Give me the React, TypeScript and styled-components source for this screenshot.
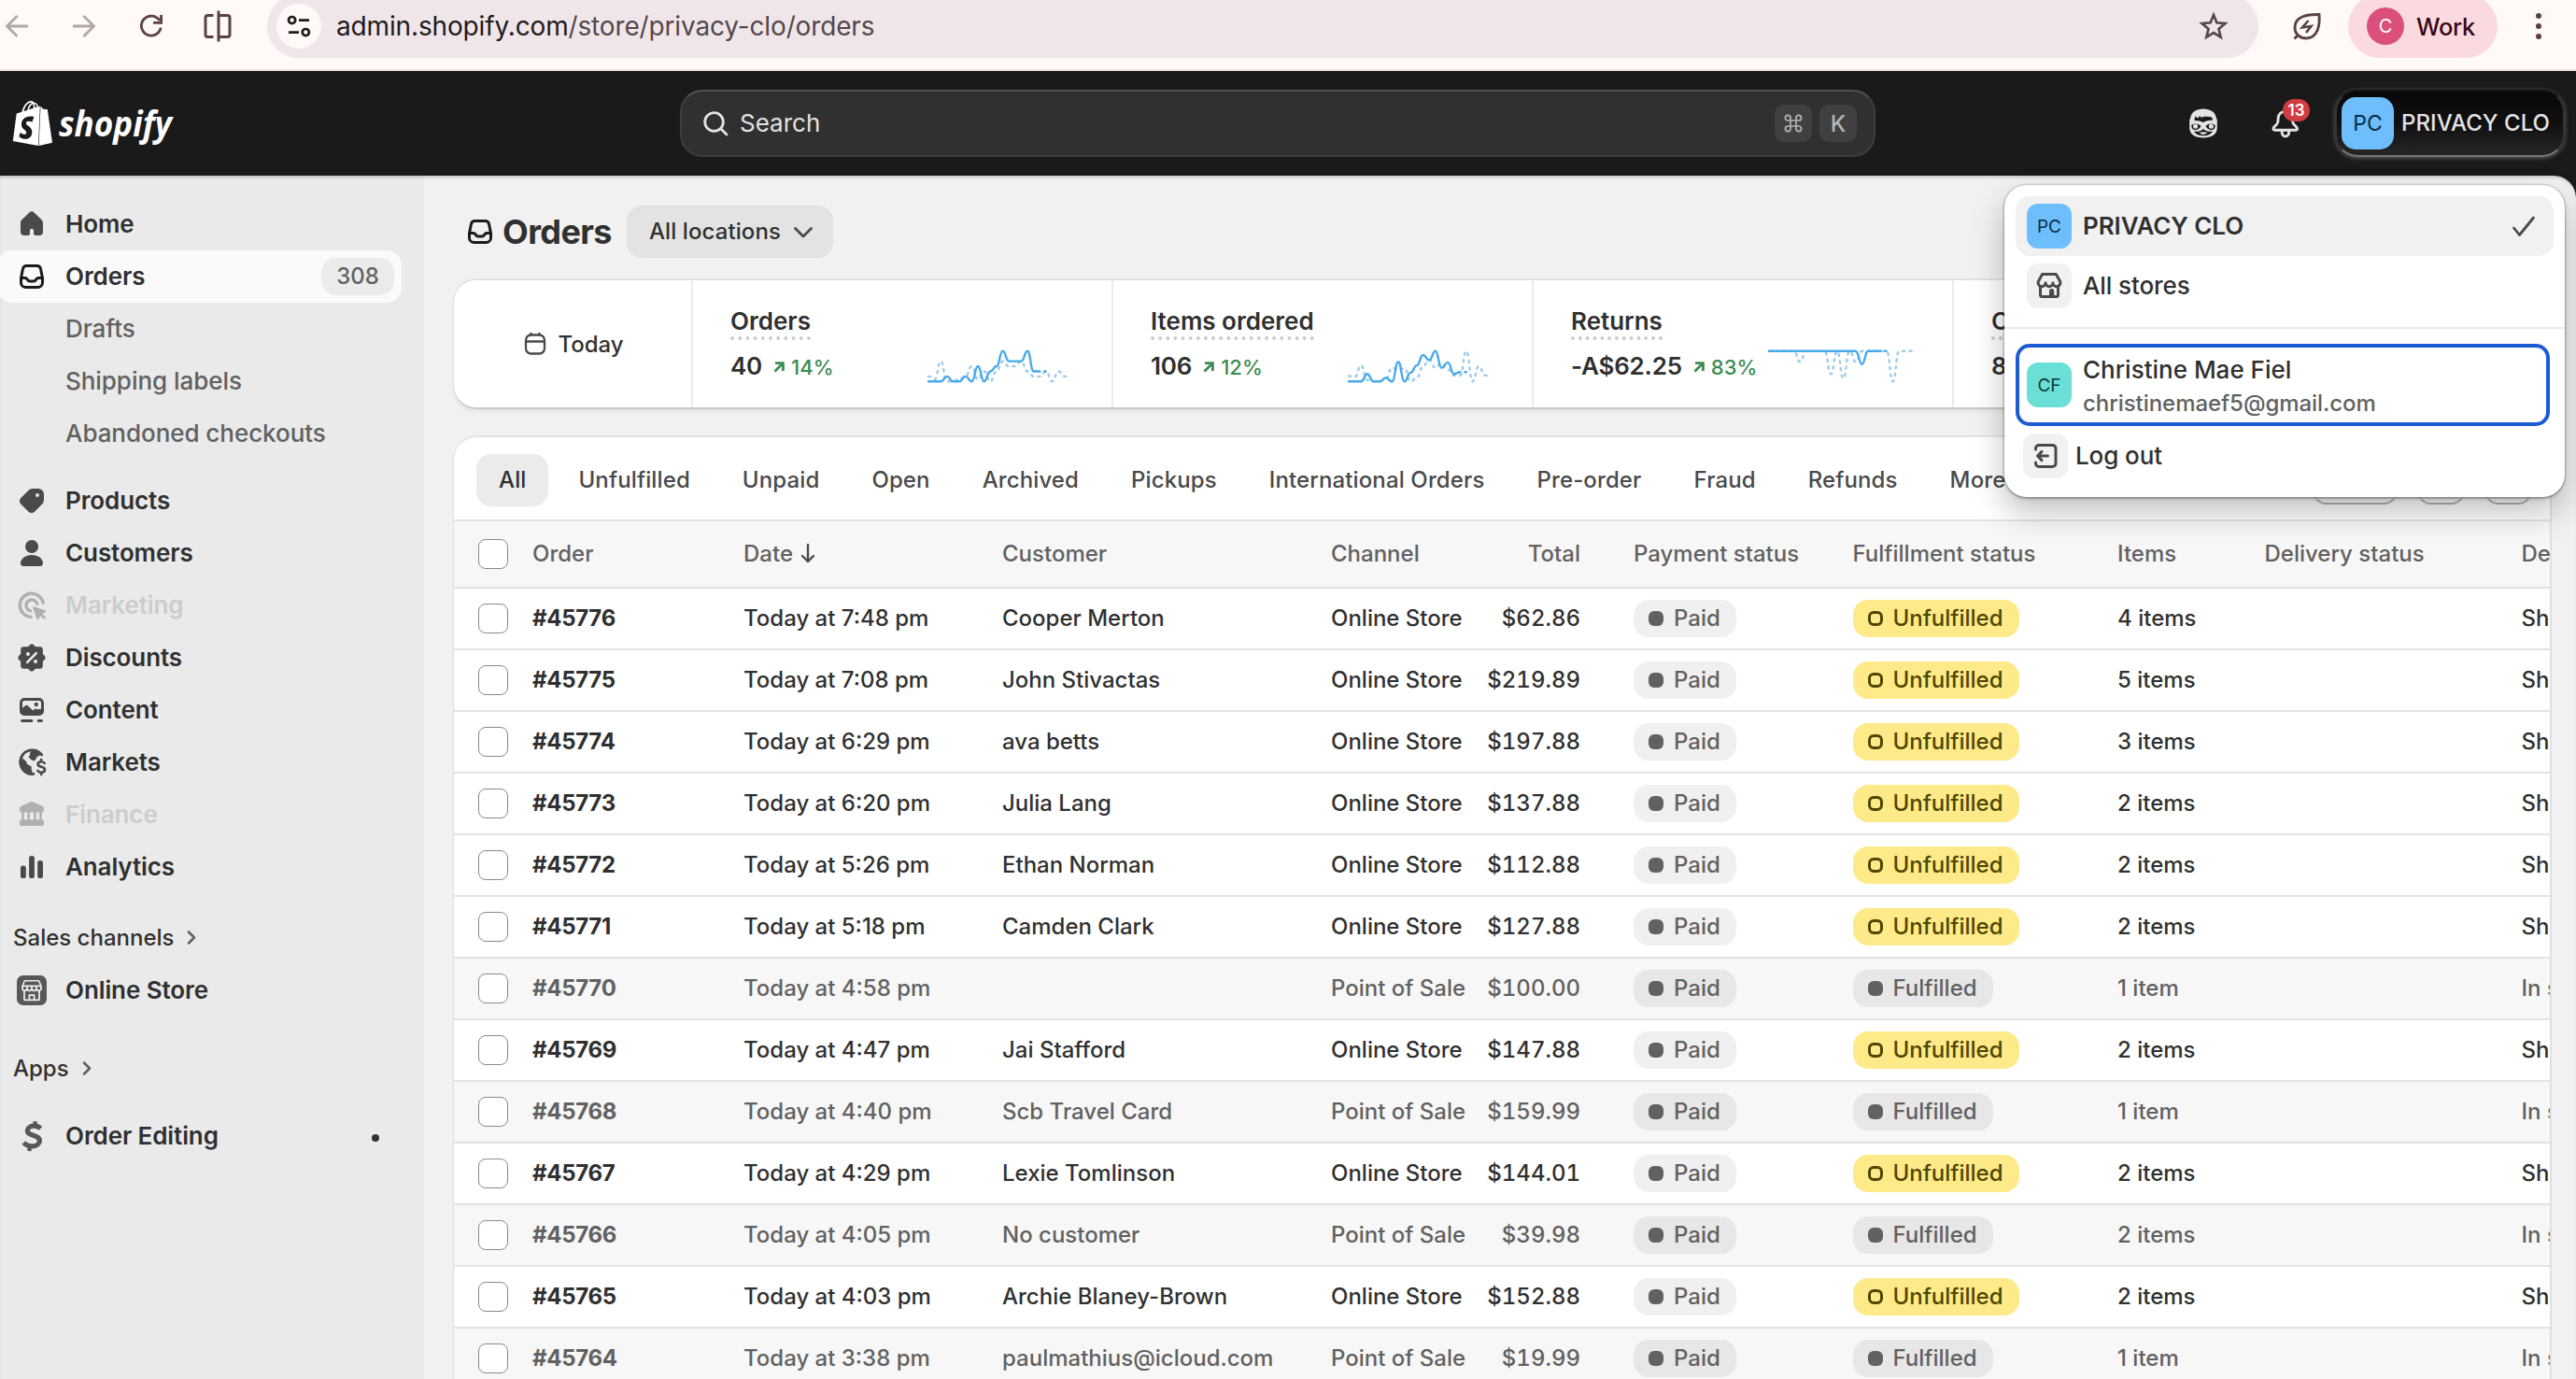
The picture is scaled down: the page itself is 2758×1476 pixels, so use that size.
import React from "react";
import styled, { createGlobalStyle, css } from "styled-components";
import { SiShopify } from "react-icons/si";

const GlobalStyle = createGlobalStyle`
  * { box-sizing: border-box; }
  html, body { margin: 0; padding: 0; background: #1a1a1a; }
  body {
    font-family: Inter, "Liberation Sans", sans-serif;
    color: #303030;
    overflow: hidden;
    -webkit-font-smoothing: antialiased;
  }
`;

const Page = styled.div`
  position: relative;
  width: 2758px;
  height: 1476px;
  overflow: hidden;
  display: flex;
  flex-direction: column;
`;

/* ---------- Browser toolbar ---------- */

const BrowserBar = styled.div`
  flex: none;
  height: 76px;
  padding-bottom: 18px;
  display: flex;
  align-items: center;
  background: #fff9f7;
  border-bottom: 2px solid #f1e2e3;
`;

const BrowserNav = styled.div`
  flex: none;
  display: grid;
  grid-template-columns: 36px 108px 36px 106px;
  justify-items: center;
  align-items: center;
  color: #5a4144;
`;

const AddressBar = styled.div`
  flex: none;
  width: 2132px;
  height: 68px;
  border-radius: 34px;
  background: #f0e6ea;
  display: flex;
  align-items: center;
  padding: 0 32px 0 10px;
`;

const SiteButton = styled.div`
  width: 48px;
  height: 48px;
  border-radius: 50%;
  background: #fff9f7;
  display: flex;
  align-items: center;
  justify-content: center;
`;

const Address = styled.div`
  flex: 1;
  padding-left: 16px;
  font-size: 28px;
  line-height: 40px;
  letter-spacing: -0.15px;
  color: #55474b;
  white-space: nowrap;
`;

const Host = styled.span`
  color: #201a1b;
`;

const BrowserActions = styled.div`
  flex: 1;
  display: flex;
  align-items: center;
  color: #5a4144;
`;

const SaverButton = styled.div`
  width: 96px;
  padding-left: 8px;
  display: flex;
  justify-content: center;
`;

const ProfilePill = styled.div`
  width: 160px;
  height: 68px;
  border-radius: 34px;
  background: #fadadf;
  color: #3a0715;
  display: flex;
  align-items: center;
  gap: 13px;
  padding-left: 20px;
  font-size: 25.5px;
  font-weight: 500;
  letter-spacing: -0.3px;
`;

const ProfileAvatar = styled.div`
  width: 40px;
  height: 40px;
  border-radius: 50%;
  background: #db4f7b;
  color: #fff;
  font-size: 20px;
  font-weight: 400;
  display: flex;
  align-items: center;
  justify-content: center;
`;

const MenuDots = styled.div`
  width: 88px;
  display: flex;
  flex-direction: column;
  align-items: center;
  gap: 5px;
`;

const MenuDot = styled.span`
  width: 6px;
  height: 6px;
  border-radius: 50%;
  background: #5a4144;
`;

/* ---------- Admin top bar ---------- */

const TopBar = styled.header`
  flex: none;
  height: 112px;
  background: #1a1a1a;
  display: flex;
  align-items: center;
  color: #e3e3e3;
`;

const Brand = styled.div`
  width: 728px;
  padding-left: 11px;
  display: flex;
  align-items: center;
  color: #fff;
`;

const Wordmark = styled.svg`
  margin-left: 4px;
  overflow: visible;
`;

const SearchField = styled.div`
  width: 1280px;
  height: 72px;
  border-radius: 24px;
  background: #303030;
  border: 2px solid #3d3d3d;
  border-top-color: #505050;
  display: flex;
  align-items: center;
  padding: 0 18px 0 20px;
  gap: 8px;
  font-size: 26px;
`;

const SearchLabel = styled.span`
  flex: 1;
  padding: 0 0 2px 2px;
`;

const Key = styled.span`
  width: 40px;
  height: 40px;
  border-radius: 10px;
  background: #404040;
  color: #b5b5b5;
  font-size: 24px;
  font-weight: 500;
  display: flex;
  align-items: center;
  justify-content: center;
`;

const TopActions = styled.div`
  flex: 1;
  display: flex;
  align-items: center;
  justify-content: flex-end;
  padding-right: 12px;
`;

const TopIcon = styled.div`
  position: relative;
  width: 40px;
  height: 40px;
  margin-right: 48px;
  display: flex;
  align-items: center;
  justify-content: center;
`;

const BellIcon = styled(TopIcon)`
  margin-right: 33px;
`;

const AlertBadge = styled.span`
  position: absolute;
  left: 17px;
  top: -6px;
  width: 29px;
  height: 24px;
  border-radius: 12px;
  background: #d13c40;
  color: #fff;
  font-size: 17px;
  font-weight: 600;
  line-height: 24px;
  text-align: center;
`;

const StoreButton = styled.div`
  width: 246px;
  height: 72px;
  border-radius: 24px;
  background: linear-gradient(180deg, #080808 0%, #101010 50%, #262626 100%);
  border: 2px solid #333333;
  border-top-color: #131313;
  border-bottom-color: #767676;
  box-shadow: 0 1px 5px rgba(255, 255, 255, 0.32);
  display: flex;
  align-items: center;
  padding-left: 5px;
  font-size: 24px;
  font-weight: 500;
  letter-spacing: 0.05px;
  white-space: nowrap;
`;

const Initials = styled.span<{ $size: number; $bg: string; $ink: string }>`
  flex: none;
  width: ${(p) => p.$size}px;
  height: ${(p) => p.$size}px;
  border-radius: ${(p) => (p.$size > 50 ? 15 : 12)}px;
  background: ${(p) => p.$bg};
  color: ${(p) => p.$ink};
  font-size: ${(p) => (p.$size > 50 ? 23 : 19)}px;
  font-weight: 400;
  letter-spacing: 0;
  display: flex;
  align-items: center;
  justify-content: center;
`;

const StoreButtonName = styled.span`
  padding: 0 0 2px 8px;
`;

/* ---------- Frame ---------- */

const Frame = styled.div`
  flex: 1;
  min-height: 0;
  display: flex;
  background: #f1f1f1;
  border-top-right-radius: 24px;
  overflow: hidden;
  box-shadow: inset 0 3px 3px -1px rgba(0, 0, 0, 0.18);
`;

const Sidebar = styled.nav`
  flex: none;
  width: 454px;
  padding-top: 24px;
  background: rgba(0, 0, 0, 0.027);
  display: flex;
  flex-direction: column;
`;

const NavRow = styled.div<{ $active?: boolean; $disabled?: boolean; $gap?: number }>`
  flex: none;
  width: 433px;
  height: 56px;
  margin-left: -3px;
  margin-top: ${(p) => p.$gap ?? 0}px;
  padding: 0 8px 0 17px;
  display: flex;
  align-items: center;
  border-radius: 16px;
  font-size: 26px;
  font-weight: 600;
  letter-spacing: -0.1px;
  color: ${(p) => (p.$disabled ? "#cccccc" : "#303030")};
  background: ${(p) => (p.$active ? "#fafafa" : "transparent")};
`;

const NavIcon = styled.span<{ $tone?: string }>`
  width: 40px;
  height: 40px;
  margin-right: 16px;
  display: flex;
  color: ${(p) => p.$tone ?? "#4a4a4a"};
`;

const NavLabel = styled.span`
  flex: 1;
  padding-bottom: 2px;
`;

const SubRow = styled.div`
  flex: none;
  height: 56px;
  padding-left: 70px;
  font-size: 26px;
  font-weight: 450;
  line-height: 56px;
  letter-spacing: -0.05px;
  color: #616161;
`;

const CountBadge = styled.span`
  width: 78px;
  height: 40px;
  border-radius: 16px;
  background: #ebebeb;
  color: #616161;
  font-size: 24px;
  font-weight: 500;
  line-height: 39px;
  text-align: center;
`;

const SectionRow = styled.div<{ $gap: number }>`
  flex: none;
  height: 40px;
  margin-top: ${(p) => p.$gap}px;
  padding: 0 0 2px 14px;
  display: flex;
  align-items: center;
  gap: 12px;
  font-size: 24px;
  font-weight: 550;
`;

const StatusDot = styled.span`
  width: 8px;
  height: 8px;
  margin: 4px 16px 0 0;
  border-radius: 50%;
  background: #303030;
`;

/* ---------- Main ---------- */

const Main = styled.main`
  flex: none;
  width: 2276px;
  padding: 32px 0 0 32px;
  display: flex;
  flex-direction: column;
`;

const TitleRow = styled.div`
  flex: none;
  height: 56px;
  display: flex;
  align-items: center;
  padding-left: 8px;
  color: #1a1a1a;
`;

const Title = styled.h1`
  margin: 0 16px 0 4px;
  font-size: 36px;
  font-weight: 650;
  letter-spacing: -0.6px;
  color: #303030;
`;

const LocationButton = styled.div`
  width: 221px;
  height: 56px;
  border-radius: 16px;
  background: #e3e3e3;
  color: #303030;
  display: flex;
  align-items: center;
  padding: 0 0 1px 24px;
  gap: 13px;
  font-size: 24px;
  font-weight: 550;
  letter-spacing: 0.1px;
  white-space: nowrap;
`;

const StatCard = styled.section`
  height: 136px;
  border-radius: 24px;
  background: #fff;
  overflow: hidden;
  display: flex;
`;

const StatShadow = styled.div`
  flex: none;
  margin-top: 24px;
  border-radius: 24px;
  box-shadow: 0 -2px 0 #e3e3e3, -1px 0 0 #dedede, 1px 0 0 #dedede, 0 2px 1px #c8c8c8, 0 5px 5px rgba(0, 0, 0, 0.05);
`;

const RangeCell = styled.div`
  flex: none;
  width: 256px;
  padding-left: 3px;
  border-right: 2px solid #ebebeb;
  display: flex;
  align-items: center;
  justify-content: center;
  gap: 12px;
  font-size: 24px;
  font-weight: 500;
`;

const StatCell = styled.div`
  flex: none;
  width: 450px;
  padding: 24px 39px 0 40px;
  border-right: 2px solid #ebebeb;
  display: flex;
  flex-direction: column;
  align-items: flex-start;
`;

const StatLabel = styled.div`
  padding-top: 4px;
  font-size: 26px;
  font-weight: 600;
  line-height: 32px;
  white-space: nowrap;
  border-bottom: 4px dotted #cccccc;
`;

const StatRow = styled.div`
  width: 100%;
  height: 32px;
  margin-top: 12px;
  display: flex;
  align-items: center;
`;

const StatValue = styled.span`
  padding-bottom: 1px;
  font-size: 26px;
  font-weight: 600;
  letter-spacing: -0.2px;
  margin-right: 12px;
`;

const Trend = styled.span`
  display: flex;
  align-items: center;
  gap: 7px;
  padding-top: 2px;
  font-size: 22px;
  font-weight: 550;
  color: #3a8b50;
`;

const SparkSvg = styled.svg`
  margin-left: auto;
  flex: none;
`;

const TableCard = styled.section`
  flex: 1;
  min-height: 0;
  margin-top: 32px;
  border-radius: 24px 24px 0 0;
  background: #fff;
  box-shadow: 0 -2px 0 #e3e3e3, -1px 0 0 #dedede, 2px 0 0 #e0e0e0;
  overflow: hidden;
`;

const Toolbar = styled.div`
  height: 90px;
  padding: 18px 18px 0 24px;
  border-bottom: 2px solid #e3e3e3;
  display: flex;
  gap: 8px;
`;

const Tab = styled.div<{ $active?: boolean }>`
  height: 56px;
  padding: 0 24px;
  border-radius: 16px;
  font-size: 24px;
  font-weight: 550;
  line-height: 56px;
  letter-spacing: 0.12px;
  white-space: nowrap;
  color: ${(p) => (p.$active ? "#303030" : "#4a4a4a")};
  background: ${(p) => (p.$active ? "#ebebeb" : "transparent")};
`;

const ToolbarButtons = styled.div`
  flex: none;
  margin-left: auto;
  padding-top: 2px;
  display: flex;
  gap: 19px;
`;

const ToolbarButton = styled.div<{ $w: number }>`
  flex: none;
  width: ${(p) => p.$w}px;
  height: 52px;
  border-radius: 16px;
  border: 2px solid #e3e3e3;
  border-bottom-color: #b0b0b0;
`;

const gridColumns = css`
  display: grid;
  grid-template-columns: 84px 226px 277px 352px 155px 112px 57px 234.5px 283.5px 157.5px 275px 200px;
  align-items: center;
`;

const HeadRow = styled.div`
  ${gridColumns}
  width: 2415px;
  height: 72px;
  background: #f7f7f7;
  border-bottom: 2px solid #e3e3e3;
  color: #616161;
  font-size: 24px;
  font-weight: 550;
`;

const OrderRow = styled.div<{ $done?: boolean }>`
  ${gridColumns}
  width: 2415px;
  height: 66px;
  border-bottom: 2px solid #e3e3e3;
  background: ${(p) => (p.$done ? "#f7f7f7" : "#ffffff")};
  color: ${(p) => (p.$done ? "#616161" : "#303030")};
  font-size: 24px;
  font-weight: 450;
`;

const Cell = styled.div<{ $right?: boolean; $strong?: boolean }>`
  padding-bottom: 2px;
  white-space: nowrap;
  display: flex;
  align-items: center;
  gap: 7px;
  justify-content: ${(p) => (p.$right ? "flex-end" : "flex-start")};
  ${(p) => p.$right && "font-variant-numeric: tabular-nums;"}
  ${(p) => p.$strong && "font-weight: 650; letter-spacing: -0.3px;"}
`;

const BadgeCell = styled.div`
  display: flex;
`;

const Checkbox = styled.span`
  width: 32px;
  height: 32px;
  margin-left: 26px;
  border: 1.5px solid #8a8a8a;
  border-radius: 8px;
  background: #fff;
  display: block;
`;

const Badge = styled.span<{ $tone: "open" | "plain" | "muted" }>`
  height: 40px;
  padding: 0 17px 0 16px;
  border-radius: 16px;
  display: inline-flex;
  align-items: center;
  gap: 11px;
  font-size: 24px;
  line-height: 38px;
  font-weight: 550;
  color: ${(p) => (p.$tone === "open" ? "#4f4700" : "#616161")};
  background: ${(p) => (p.$tone === "open" ? "#feea89" : p.$tone === "plain" ? "#f0f0f0" : "#e7e7e7")};
`;

const BadgeText = styled.span`
  padding-bottom: 1px;
`;

const Pip = styled.span<{ $hollow?: boolean }>`
  width: 16px;
  height: 16px;
  border-radius: 6px;
  ${(p) => (p.$hollow ? "border: 3px solid currentColor;" : "background: currentColor;")}
`;

/* ---------- Account menu ---------- */

const Menu = styled.div`
  position: absolute;
  left: 2146px;
  top: 198px;
  width: 600px;
  height: 334px;
  border-radius: 24px;
  background: #fff;
  box-shadow: 0 0 0 1.5px rgba(0, 0, 0, 0.12), 0 2px 3px rgba(0, 0, 0, 0.25), 0 16px 34px rgba(0, 0, 0, 0.25);
  display: flex;
  flex-direction: column;
  padding-top: 12px;
`;

const MenuItem = styled.div<{ $selected?: boolean }>`
  height: 64px;
  width: 576px;
  margin-left: 12px;
  padding: 0 19px 0 12px;
  border-radius: 16px;
  display: flex;
  align-items: center;
  gap: 12px;
  font-size: 26px;
  font-weight: ${(p) => (p.$selected ? 600 : 450)};
  letter-spacing: -0.1px;
  background: ${(p) => (p.$selected ? "#f1f1f1" : "transparent")};
`;

const MenuLabel = styled.span`
  flex: 1;
  padding-bottom: 1px;
`;

const IconTile = styled.span`
  flex: none;
  width: 48px;
  height: 48px;
  border-radius: 12px;
  background: #f1f1f1;
  color: #4a4a4a;
  display: flex;
  align-items: center;
  justify-content: center;
`;

const MenuDivider = styled.div`
  height: 2px;
  margin: 12px 0 16px;
  background: #e8e8e8;
`;

const AccountItem = styled.div`
  height: 88px;
  width: 572px;
  margin-left: 12px;
  padding-left: 8px;
  border: 4px solid #1c5bd2;
  border-radius: 15px;
  display: flex;
  align-items: center;
  gap: 12px;
`;

const AccountText = styled.div`
  padding-top: 4px;
`;

const AccountName = styled.div`
  font-size: 26px;
  font-weight: 550;
  line-height: 36px;
`;

const AccountEmail = styled.div`
  font-size: 24px;
  font-weight: 450;
  line-height: 36px;
  letter-spacing: -0.05px;
  color: #616161;
`;

const LogoutItem = styled(MenuItem)`
  padding-left: 8px;
  gap: 8px;
`;

/* ---------- Icons ---------- */

const Box20 = ({ size = 40, children }: { size?: number; children: React.ReactNode }) => (
  <svg width={size} height={size} viewBox="0 0 20 20" fill="currentColor">
    {children}
  </svg>
);

const line = { fill: "none", stroke: "currentColor", strokeWidth: 1.5, strokeLinecap: "round", strokeLinejoin: "round" } as const;

const InboxIcon = () => (
  <Box20>
    <path {...line} d="M4.25 10.9 5.2 6a2.1 2.1 0 0 1 2.1-1.75h5.4A2.1 2.1 0 0 1 14.8 6l.95 4.9v2.35a2.5 2.5 0 0 1-2.5 2.5h-6.5a2.5 2.5 0 0 1-2.5-2.5z" />
    <path {...line} d="M4.25 10.75h2.1c.5 0 1 .3 1.25.75.3.6.85 1 1.5 1h1.8c.65 0 1.2-.4 1.5-1 .25-.45.75-.75 1.25-.75h2.1" />
  </Box20>
);

const HomeIcon = () => (
  <Box20>
    <path d="M8.6 3.85a2 2 0 0 1 2.8 0l3.8 3.6a2.7 2.7 0 0 1 .8 1.95V14a2 2 0 0 1-2 2h-2a1 1 0 0 1-1-1v-1.6a1 1 0 0 0-2 0V15a1 1 0 0 1-1 1H6a2 2 0 0 1-2-2V9.4c0-.75.3-1.45.8-1.95z" />
  </Box20>
);

const TagIcon = () => (
  <Box20>
    <path fillRule="evenodd" d="M10.4 3.5h3.1a3 3 0 0 1 3 3v3.1a3 3 0 0 1-.9 2.1l-4.1 4.15a2.25 2.25 0 0 1-3.2 0l-4.15-4.15a2.25 2.25 0 0 1 0-3.2L8.3 4.4a3 3 0 0 1 2.1-.9M13 8a1 1 0 1 0 0-2 1 1 0 0 0 0 2" />
  </Box20>
);

const PersonIcon = () => (
  <Box20>
    <circle cx="10" cy="6.5" r="3.5" />
    <path d="M4 15.4C4 13 6.7 11 10 11s6 2 6 4.4c0 .9-.6 1.6-1.4 1.6H5.4c-.8 0-1.4-.7-1.4-1.6" />
  </Box20>
);

const TargetIcon = () => (
  <Box20>
    <path {...line} strokeWidth={1.7} d="M16.1 8.6A6.3 6.3 0 1 0 9.6 16.2" />
    <path {...line} strokeWidth={1.7} d="M12.9 9.2A3 3 0 1 0 9.3 12.9" />
    <path d="M11.1 10.6 17.2 12.6c.5.2.5.8.1 1l-1.7.9 1.6 1.6c.3.3.3.7 0 1s-.7.3-1 0l-1.7-1.6-.8 1.7c-.2.5-.9.4-1-.1l-2.1-5.9c-.1-.4.2-.7.5-.6" />
  </Box20>
);

const DiscountIcon = () => (
  <Box20>
    <rect x="4.1" y="4.1" width="11.8" height="11.8" rx="1.6" />
    <rect x="4.4" y="4.4" width="11.2" height="11.2" rx="1.6" transform="rotate(45 10 10)" />
    <path d="m7.6 12.4 4.8-4.8" stroke="#ebebeb" strokeWidth="1.3" strokeLinecap="round" />
    <circle cx="8" cy="8" r="1" fill="#ebebeb" />
    <circle cx="12" cy="12" r="1" fill="#ebebeb" />
  </Box20>
);

const ContentIcon = () => (
  <Box20>
    <rect {...line} x="4.25" y="4.25" width="11.5" height="8" rx="1.8" />
    <path d="M4.2 9.6 6.4 7.7c.5-.4 1.1-.4 1.6 0l2.6 2.5.7-.6c.5-.4 1.1-.4 1.6 0l2.6-.2v1.4a1.8 1.8 0 0 1-1.8 1.8H6a1.8 1.8 0 0 1-1.8-1.8z" />
    <circle cx="12.4" cy="7" r="1.1" />
    <path {...line} d="M4.75 15.75h5.2M13.6 15.75h1.65" />
  </Box20>
);

const GlobeIcon = () => (
  <Box20>
    <path {...line} strokeWidth={1.4} d="M15.4 6A6.4 6.4 0 1 0 11 16.2" />
    <path d="M4 6.6c1 1.3 1.7 1.8 2.8 2.6.5.4.5 1.1.6 1.6.3.7 1.8.7 2.3 1.4.4.7-.1 1.3.3 2l.6 2.3c-3.7.3-7-2.6-7-6.5 0-1.3.1-2.4.4-3.4" />
    <path d="M9.2 4.6c.4-.7 1.5-1.1 2.4-.9 1.2.3 2.6 1 3.6 2.3-.8.5-2 .5-2.5 1.2-.5.8-.6 1.7-1.6 1.9-1 .1-1.5-.8-2.3-1.3-.7-.5-.4-1 .1-1.5.4-.4 0-1.2.3-1.7" />
    <path {...line} strokeWidth={1.3} d="M16.9 10.5c-.3-.6-1-.9-1.7-.9-1 0-1.9.5-1.9 1.4 0 2 3.7.8 3.7 2.9 0 1-.9 1.5-1.9 1.5-.8 0-1.5-.3-1.9-1M15.1 8.5v1M15.1 15.5v1" />
  </Box20>
);

const BankIcon = () => (
  <Box20>
    <path d="M9.2 3.2a1.9 1.9 0 0 1 1.6 0l4.8 2.2c.5.25.9.75.9 1.35v.9a1.1 1.1 0 0 1-1.1 1.1H4.6a1.1 1.1 0 0 1-1.1-1.1v-.9c0-.6.35-1.1.9-1.35z" />
    <path d="M4.6 8.5h1.3v4.3H4.6zM7.7 8.5h1.3v4.3H7.7zM11 8.5h1.3v4.3H11zM14.1 8.5h1.3v4.3h-1.3z" />
    <rect x="3.5" y="12.6" width="13" height="3.4" rx="1" />
  </Box20>
);

const BarsIcon = () => (
  <Box20>
    <rect x="4" y="9.3" width="2.9" height="6.7" rx="1.3" />
    <rect x="8.55" y="4" width="2.9" height="12" rx="1.3" />
    <rect x="13.1" y="6.5" width="2.9" height="9.5" rx="1.3" />
  </Box20>
);

const OnlineStoreIcon = () => (
  <Box20>
    <rect x="2" y="2" width="16" height="16" rx="3.4" fill="#585858" />
    <path d="M6.2 4.9h7.6l1.2 2.8H5z" fill="none" stroke="#ebebeb" strokeWidth=".8" strokeLinejoin="round" />
    <path d="M5 8v.9a1.25 1.25 0 0 0 2.5 0V8M7.5 8.9a1.25 1.25 0 0 0 2.5 0V8M10 8.9a1.25 1.25 0 0 0 2.5 0V8M12.5 8.9a1.25 1.25 0 0 0 2.5 0V8" fill="none" stroke="#ebebeb" strokeWidth=".9" />
    <path d="M6 10v4.700c0 .3.2.5.5.5h7c.3 0 .5-.2.5-.5V10M8.700 15v-2.400h2.600V15" fill="none" stroke="#ebebeb" strokeWidth=".9" />
  </Box20>
);

const MoneyIcon = () => (
  <Box20>
    <g fill="none" stroke="#585858">
      <path strokeWidth="2.6" d="M14.7 5.9c-1-1-2.5-1.5-4-1.3-1.8.2-3 1.2-3 2.5 0 3 6.5 2 6.5 5.400 0 1.600-1.600 2.800-3.600 2.900-1.900.1-3.600-.5-4.900-1.900" />
      <path strokeWidth="2.200" d="M11.900 2.100 11.600 5M9 15l-.3 3" />
    </g>
  </Box20>
);

const Chevron = () => (
  <svg width="16" height="20" viewBox="0 0 16 20" fill="none" stroke="#616161" strokeWidth="2.6" strokeLinecap="round" strokeLinejoin="round">
    <path d="m4 4.500 6 6-6 6" />
  </svg>
);

const StorefrontIcon = () => (
  <Box20>
    <path {...line} d="M6.3 3.75h7.4l2.25 4.1v.5a1.980 1.980 0 0 1-3.970 0 1.980 1.980 0 0 1-3.960 0 1.980 1.980 0 0 1-3.970 0v-.5z" />
    <path {...line} d="M5.25 10.5v4.25c0 .55.45 1 1 1h7.5c.55 0 1-.45 1-1V10.5" />
    <path d="M10 16v-3.2a1.3 1.3 0 0 1 2.6 0V16z" />
  </Box20>
);

const ExitIcon = () => (
  <Box20>
    <path {...line} d="M4.75 6.5V6A1.75 1.75 0 0 1 6.5 4.25h7.25A1.75 1.75 0 0 1 15.5 6v8a1.75 1.75 0 0 1-1.75 1.75H6.5A1.75 1.75 0 0 1 4.75 14v-.5" />
    <path {...line} d="M11.25 10H6M8 7.7 5.75 10 8 12.3" />
  </Box20>
);

const SidekickIcon = () => (
  <svg width="32" height="32" viewBox="0 0 32 32">
    <path d="M16 .5c7.500 0 12.800 3.500 13.800 9.500l1 2.500v8.500c0 6.500-6 10.500-14.800 10.500S1.200 27.500 1.200 21v-8.500l1-2.500C3.200 4 8.500.5 16 .5" fill="#e3e3e3" />
    <path d="M6.500 13c0-2.400.5-3.800 1.500-4.800.5 1.300 1.200 2 2.300 2.400.3-1.200 1.200-2 2.700-2.400l.2 1.600c3-1.200 8-1.500 11-.6 1.300.5 1.800 1.800 1.800 3.800-3.400-.5-6.800.4-10 2-3-1.600-6.200-2.300-9.500-2" fill="#1a1a1a" />
    <path d="M3.200 18.200c2.300-2.200 7-2.300 10.300.9-1.500 3-4.300 4.300-6.800 4-2-.3-3.300-1.800-3.500-4.900M28.800 18.200c-2.300-2.200-7-2.300-10.300.9 1.500 3 4.300 4.300 6.800 4 2-.3 3.300-1.800 3.500-4.900" fill="#1a1a1a" />
    <circle cx="7.600" cy="19.300" r="2.500" fill="#e3e3e3" />
    <circle cx="24.400" cy="19.300" r="2.500" fill="#e3e3e3" />
    <path d="M6 24.500c4 .9 7.500 0 10-2.500 2.500 2.500 6 3.400 10 2.500-1.500 3-5 4.700-10 4.700s-8.500-1.700-10-4.700" fill="#1a1a1a" />
    <path d="M11.800 25.300c1.600.7 3 .4 4.200-.4 1.200.8 2.600 1.100 4.200.4-.6 1.800-2.200 2.700-4.200 2.700s-3.600-.9-4.200-2.700" fill="#e3e3e3" />
  </svg>
);

const Bell = () => (
  <svg width="30" height="32" viewBox="0 0 30 32" fill="none" stroke="#e3e3e3" strokeWidth="2.9" strokeLinejoin="round">
    <path d="M14.5 3.5c-4 0-7 2.8-7.3 6.5l-.3 4c-.1 1.500-.7 2.600-1.900 3.700C3.300 19.300 2 20.200 2 21.700c0 1 .8 1.500 2 1.500h21.500c1.200 0 2-.5 2-1.500 0-1.500-1.500-2.400-3-4-1.200-1.100-1.800-2.200-1.900-3.700l-.3-4c-.3-3.700-3.800-6.500-7.800-6.500z" />
    <path d="M11.200 24v2.200a3.700 3.700 0 0 0 7.400 0V24" />
  </svg>
);

const TrendArrow = () => (
  <svg width="12" height="12" viewBox="0 0 12 12" fill="none" stroke="#3a8b50" strokeWidth="2.8">
    <path d="M2 1.600h8.400V10M10 2 1.500 10.500" />
  </svg>
);

/* ---------- Sparkline ---------- */

const STEP = 6.63;
const px = (i: number) => 4 + STEP * i;
const py = (v: number) => 38.3 - v * 32.5;

const curve = (values: number[]) =>
  values
    .map((v, i) => {
      const x = px(i);
      if (i === 0) return `M${x} ${py(v)}`;
      const mid = x - STEP / 2;
      return `C${mid} ${py(values[i - 1])} ${mid} ${py(v)} ${x} ${py(v)}`;
    })
    .join("");

const Spark = ({ now, before }: { now: number[]; before: number[] }) => {
  const last = now[now.length - 1];
  return (
    <SparkSvg width="161" height="44" viewBox="0 0 161 44" fill="none" strokeLinecap="round" strokeLinejoin="round" strokeWidth="2.4">
      <path d={curve(before)} stroke="#9ccbec" strokeDasharray="2.2 5.4" />
      <path d={curve(now)} stroke="#48a9ea" />
      <path d={`M${px(now.length - 1) + 5} ${py(last)}h1.2`} stroke="#48a9ea" />
    </SparkSvg>
  );
};

const sixths = (values: number[]) => values.map((v) => v / 6);
const flipped = (values: number[]) => values.map((v) => 1 - v);

const stats = [
  {
    label: "Orders",
    value: "40",
    trend: "14%",
    now: sixths([0, 0, 0, 1, 0, 0, 1, 0, 3, 0, 2, 3, 6, 4, 4, 4, 6, 2, 2]),
    before: sixths([1, 0.4, 4, 0, 0, 0.6, 1, 3, 0.4, 2, 0, 2, 4, 3, 3, 4, 2, 1, 1, 2, 0, 2, 1, 1]),
  },
  {
    label: "Items ordered",
    value: "106",
    trend: "12%",
    now: [0, 0, 0, 0.25, 0, 0, 0.12, 0, 0.64, 0, 0.29, 0.53, 0.87, 0.7, 1, 0.45, 0.63, 0.25, 0.31],
    before: [0.18, 0.15, 0.53, 0.05, 0, 0, 0.1, 0.45, 0.38, 0.43, 0, 0.12, 0.5, 0.72, 0.45, 0.6, 0.4, 0.2, 0.2, 1, 0, 0.5, 0.2, 0.16],
  },
  {
    label: "Returns",
    value: "-A$62.25",
    trend: "83%",
    now: flipped([0, 0, 0, 0, 0, 0, 0, 0, 0, 0, 0, 0, 0, 0, 0, 0.43, 0, 0, 0]),
    before: flipped([0, 0, 0, 0, 0, 0.35, 0, 0, 0, 0, 0.75, 0, 0.9, 0, 0.35, 0, 0, 0, 0, 0, 1, 0, 0, 0]),
  },
  { label: "Orders fulfilled", value: "8" },
];

const tabs = ["All", "Unfulfilled", "Unpaid", "Open", "Archived", "Pickups", "International Orders", "Pre-order", "Fraud", "Refunds", "More views"];

type Order = [id: string, date: string, customer: string, total: string, items: string, done?: boolean];

const orders: Order[] = [
  ["#45776", "Today at 7:48 pm", "Cooper Merton", "$62.86", "4 items"],
  ["#45775", "Today at 7:08 pm", "John Stivactas", "$219.89", "5 items"],
  ["#45774", "Today at 6:29 pm", "ava betts", "$197.88", "3 items"],
  ["#45773", "Today at 6:20 pm", "Julia Lang", "$137.88", "2 items"],
  ["#45772", "Today at 5:26 pm", "Ethan Norman", "$112.88", "2 items"],
  ["#45771", "Today at 5:18 pm", "Camden Clark", "$127.88", "2 items"],
  ["#45770", "Today at 4:58 pm", "", "$100.00", "1 item", true],
  ["#45769", "Today at 4:47 pm", "Jai Stafford", "$147.88", "2 items"],
  ["#45768", "Today at 4:40 pm", "Scb Travel Card", "$159.99", "1 item", true],
  ["#45767", "Today at 4:29 pm", "Lexie Tomlinson", "$144.01", "2 items"],
  ["#45766", "Today at 4:05 pm", "No customer", "$39.98", "2 items", true],
  ["#45765", "Today at 4:03 pm", "Archie Blaney-Brown", "$152.88", "2 items"],
  ["#45764", "Today at 3:38 pm", "paulmathius@icloud.com", "$19.99", "1 item", true],
];

const Browser = () => (
  <BrowserBar>
    <BrowserNav>
      <svg width="28" height="28" viewBox="0 0 28 28" fill="none" stroke="#b1a8a8" strokeWidth="2.8">
        <path d="M26 14H4M14.5 3 3.5 14l11 11" />
      </svg>
      <svg width="28" height="28" viewBox="0 0 28 28" fill="none" stroke="#b1a8a8" strokeWidth="2.8">
        <path d="M2 14h22M13.5 3l11 11-11 11" />
      </svg>
      <svg width="28" height="28" viewBox="0 0 28 28" fill="none" stroke="currentColor" strokeWidth="2.8">
        <path d="M24.2 15.5A10.5 10.5 0 1 1 22.8 8M24.6 2v8.3h-8.5" />
      </svg>
      <svg width="32" height="36" viewBox="0 0 32 36" fill="none" stroke="currentColor" strokeWidth="3">
        <path d="M11.5 6.5H5.5a2.5 2.5 0 0 0-2.5 2.5v18a2.5 2.5 0 0 0 2.5 2.5h6M17 1.5v33M17 6.5h9.5A2.5 2.5 0 0 1 29 9v18a2.5 2.5 0 0 1-2.5 2.5H17" />
      </svg>
    </BrowserNav>
    <AddressBar>
      <SiteButton>
        <svg width="28" height="28" viewBox="0 0 28 28" fill="none" stroke="#201a1b" strokeWidth="2.7">
          <circle cx="6.6" cy="7.6" r="3.6" />
          <path d="M14 7.6h11M3 20.6h11" />
          <circle cx="21.3" cy="20.6" r="3.6" />
        </svg>
      </SiteButton>
      <Address>
        <Host>admin.shopify.com</Host>/store/privacy-clo/orders
      </Address>
      <svg width="32" height="32" viewBox="0 0 32 32" fill="none" stroke="#55474b" strokeWidth="2.7">
        <path d="m16 4 3.4 8.3 9 .8-6.9 5.9 2.1 8.7-7.6-4.6-7.6 4.600 2.100-8.700-6.900-5.900 9-.8z" />
      </svg>
    </AddressBar>
    <BrowserActions>
      <SaverButton>
        <svg width="32" height="32" viewBox="0 0 32 32" fill="none" stroke="currentColor" strokeWidth="2.9">
          <path d="M29 3.5C17 3.3 3 5 3 17.5c0 7 5.5 11.5 12 11.5C27.500 29 30 15 29 3.5zM6.5 25.500 2.500 29.500" />
          <path d="m17.500 10-6.500 7.500 9.500-1.500-5.500 7" strokeWidth="2.6" />
        </svg>
      </SaverButton>
      <ProfilePill>
        <ProfileAvatar>C</ProfileAvatar>Work
      </ProfilePill>
      <MenuDots>
        <MenuDot />
        <MenuDot />
        <MenuDot />
      </MenuDots>
    </BrowserActions>
  </BrowserBar>
);

const Header = () => (
  <TopBar>
    <Brand>
      <SiShopify size={48} />
      <Wordmark width="126" height="56" viewBox="0 0 126 56">
        <text x="0" y="42" textLength="121" lengthAdjust="spacingAndGlyphs" fontFamily="Open Sans, Noto Sans, sans-serif" fontWeight="700" fontStyle="italic" fontSize="38" fill="#fff">
          shopify
        </text>
      </Wordmark>
    </Brand>
    <SearchField>
      <svg width="32" height="32" viewBox="0 0 32 32" fill="none" stroke="#e3e3e3" strokeWidth="2.8" strokeLinecap="round">
        <circle cx="14.5" cy="14.5" r="9.8" />
        <path d="m22 22 6 6" />
      </svg>
      <SearchLabel>Search</SearchLabel>
      <Key>
        <svg width="20" height="20" viewBox="0 0 20 20" fill="none" stroke="#b5b5b5" strokeWidth="1.7">
          <path d="M7 13V4.2A2.8 2.8 0 1 0 4.2 7h11.6A2.8 2.8 0 1 0 13 4.2v11.6a2.8 2.8 0 1 0 2.8-2.8H4.2A2.8 2.8 0 1 0 7 15.8z" />
        </svg>
      </Key>
      <Key>K</Key>
    </SearchField>
    <TopActions>
      <TopIcon>
        <SidekickIcon />
      </TopIcon>
      <BellIcon>
        <Bell />
        <AlertBadge>13</AlertBadge>
      </BellIcon>
      <StoreButton>
        <Initials $size={56} $bg="#6dbefb" $ink="#0a2b45">PC</Initials>
        <StoreButtonName>PRIVACY CLO</StoreButtonName>
      </StoreButton>
    </TopActions>
  </TopBar>
);

const SideNav = () => (
  <Sidebar>
    <NavRow><NavIcon><HomeIcon /></NavIcon><NavLabel>Home</NavLabel></NavRow>
    <NavRow $active>
      <NavIcon $tone="#1a1a1a"><InboxIcon /></NavIcon>
      <NavLabel>Orders</NavLabel>
      <CountBadge>308</CountBadge>
    </NavRow>
    <SubRow>Drafts</SubRow>
    <SubRow>Shipping labels</SubRow>
    <SubRow>Abandoned checkouts</SubRow>
    <NavRow $gap={16}><NavIcon><TagIcon /></NavIcon><NavLabel>Products</NavLabel></NavRow>
    <NavRow><NavIcon><PersonIcon /></NavIcon><NavLabel>Customers</NavLabel></NavRow>
    <NavRow $disabled><NavIcon $tone="#b0b0b0"><TargetIcon /></NavIcon><NavLabel>Marketing</NavLabel></NavRow>
    <NavRow><NavIcon><DiscountIcon /></NavIcon><NavLabel>Discounts</NavLabel></NavRow>
    <NavRow><NavIcon><ContentIcon /></NavIcon><NavLabel>Content</NavLabel></NavRow>
    <NavRow><NavIcon><GlobeIcon /></NavIcon><NavLabel>Markets</NavLabel></NavRow>
    <NavRow $disabled><NavIcon $tone="#b0b0b0"><BankIcon /></NavIcon><NavLabel>Finance</NavLabel></NavRow>
    <NavRow><NavIcon><BarsIcon /></NavIcon><NavLabel>Analytics</NavLabel></NavRow>
    <SectionRow $gap={28}>Sales channels<Chevron /></SectionRow>
    <NavRow $gap={8}><NavIcon><OnlineStoreIcon /></NavIcon><NavLabel>Online Store</NavLabel></NavRow>
    <SectionRow $gap={36}>Apps<Chevron /></SectionRow>
    <NavRow $gap={24}><NavIcon><MoneyIcon /></NavIcon><NavLabel>Order Editing</NavLabel><StatusDot /></NavRow>
  </Sidebar>
);

const AccountMenu = () => (
  <Menu>
    <MenuItem $selected>
      <Initials $size={48} $bg="#6dbefb" $ink="#0a2b45">PC</Initials>
      <MenuLabel>PRIVACY CLO</MenuLabel>
      <svg width="26" height="26" viewBox="0 0 26 26" fill="none" stroke="#4a4a4a" strokeWidth="2.8" strokeLinecap="round" strokeLinejoin="round">
        <path d="m2.5 15 6 7.5L23.500 4" />
      </svg>
    </MenuItem>
    <MenuItem>
      <IconTile><StorefrontIcon /></IconTile>
      <MenuLabel>All stores</MenuLabel>
    </MenuItem>
    <MenuDivider />
    <AccountItem>
      <Initials $size={48} $bg="#6adfd5" $ink="#0c3b37">CF</Initials>
      <AccountText>
        <AccountName>Christine Mae Fiel</AccountName>
        <AccountEmail>christinemaef5@gmail.com</AccountEmail>
      </AccountText>
    </AccountItem>
    <LogoutItem>
      <IconTile><ExitIcon /></IconTile>
      <MenuLabel>Log out</MenuLabel>
    </LogoutItem>
  </Menu>
);

export default function App() {
  return (
    <Page>
      <GlobalStyle />
      <Browser />
      <Header />
      <Frame>
        <SideNav />
        <Main>
          <TitleRow>
            <InboxIcon />
            <Title>Orders</Title>
            <LocationButton>
              All locations
              <svg width="22" height="16" viewBox="0 0 22 16" fill="none" stroke="#4a4a4a" strokeWidth="2.8" strokeLinecap="round" strokeLinejoin="round">
                <path d="m2.5 4.500 8.500 8.500L19.500 4.500" />
              </svg>
            </LocationButton>
          </TitleRow>
          <StatShadow>
            <StatCard>
              <RangeCell>
                <svg width="24" height="26" viewBox="0 0 24 26" fill="none" stroke="#4a4a4a" strokeWidth="2.3" strokeLinecap="round">
                  <rect x="2" y="3.5" width="20" height="20" rx="5.5" />
                  <path d="M2.5 10.5h19M7.5 1.8v2M16.5 1.8v2" />
                </svg>
                Today
              </RangeCell>
              {stats.map((s) => (
                <StatCell key={s.label}>
                  <StatLabel>{s.label}</StatLabel>
                  <StatRow>
                    <StatValue>{s.value}</StatValue>
                    {s.trend && <Trend><TrendArrow />{s.trend}</Trend>}
                    {s.now && s.before && <Spark now={s.now} before={s.before} />}
                  </StatRow>
                </StatCell>
              ))}
            </StatCard>
          </StatShadow>
          <TableCard>
            <Toolbar>
              {tabs.map((t) => (
                <Tab key={t} $active={t === "All"}>{t}</Tab>
              ))}
              <ToolbarButtons>
                <ToolbarButton $w={93} />
                <ToolbarButton $w={53} />
                <ToolbarButton $w={53} />
              </ToolbarButtons>
            </Toolbar>
            <HeadRow>
              <Checkbox />
              <Cell>Order</Cell>
              <Cell>
                Date
                <svg width="18" height="24" viewBox="0 0 18 24" fill="none" stroke="#4a4a4a" strokeWidth="2.4" strokeLinecap="round" strokeLinejoin="round">
                  <path d="M9 3v18M3 15l6 6 6-6" />
                </svg>
              </Cell>
              <Cell>Customer</Cell>
              <Cell>Channel</Cell>
              <Cell $right>Total</Cell>
              <span />
              <Cell>Payment status</Cell>
              <Cell>Fulfillment status</Cell>
              <Cell>Items</Cell>
              <Cell>Delivery status</Cell>
              <Cell>Delivery method</Cell>
            </HeadRow>
            {orders.map(([id, date, customer, total, items, done]) => (
              <OrderRow key={id} $done={done}>
                <Checkbox />
                <Cell $strong>{id}</Cell>
                <Cell>{date}</Cell>
                <Cell>{customer}</Cell>
                <Cell>{done ? "Point of Sale" : "Online Store"}</Cell>
                <Cell $right>{total}</Cell>
                <span />
                <BadgeCell>
                  <Badge $tone={done ? "muted" : "plain"}><Pip /><BadgeText>Paid</BadgeText></Badge>
                </BadgeCell>
                <BadgeCell>
                  <Badge $tone={done ? "muted" : "open"}>
                    <Pip $hollow={!done} />
                    <BadgeText>{done ? "Fulfilled" : "Unfulfilled"}</BadgeText>
                  </Badge>
                </BadgeCell>
                <Cell>{items}</Cell>
                <span />
                <Cell>{done ? "In store" : "Shipping"}</Cell>
              </OrderRow>
            ))}
          </TableCard>
        </Main>
      </Frame>
      <AccountMenu />
    </Page>
  );
}
